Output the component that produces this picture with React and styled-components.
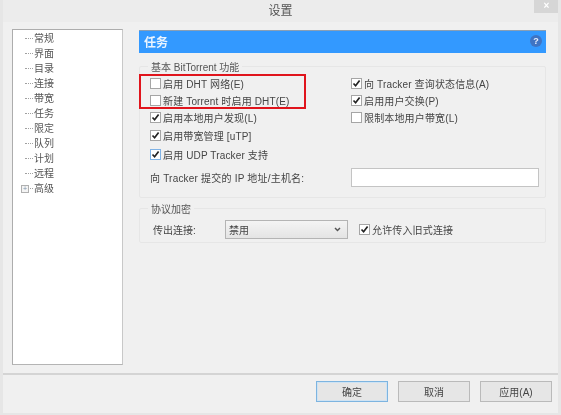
import React from 'react';
import styled, { createGlobalStyle } from 'styled-components';

const GlobalStyle = createGlobalStyle`
  html, body {
    margin: 0;
    padding: 0;
    background: #f0f0f0;
  }
  body {
    font-family: "Liberation Sans", "Noto Sans CJK SC", sans-serif;
    font-size: 10px;
    color: #454545;
  }
`;

const Window = styled.div`
  position: relative;
  width: 561px;
  height: 415px;
  box-sizing: border-box;
  display: flex;
  flex-direction: column;
  background: #f0f0f0;
  border: 1px solid #e6e6e6;
  border-width: 0 3px 2px 3px;
  overflow: hidden;
  filter: blur(0.45px);
`;

const TitleBar = styled.div`
  height: 22px;
  flex: none;
  display: flex;
  align-items: center;
  justify-content: center;
  position: relative;
  background: #ececec;
  font-size: 12px;
  color: #555;
  padding-bottom: 4px;
  box-sizing: border-box;
`;

const CloseButton = styled.div`
  position: absolute;
  top: 0;
  right: -1px;
  width: 25px;
  height: 13px;
  background: #d6d6d6;
  color: #fff;
  font-size: 10px;
  font-weight: bold;
  line-height: 12px;
  text-align: center;
`;

const Body = styled.div`
  flex: 1;
  min-height: 0;
  display: flex;
  gap: 16px;
  padding: 7px 12px 8px 9px;
  border-bottom: 2px solid #d4d4d4;
`;

const Sidebar = styled.ul`
  width: 111px;
  flex: none;
  box-sizing: border-box;
  margin: 0;
  padding: 1px 0 0 21px;
  list-style: none;
  background: #fff;
  border: 1px solid #adadad;
  border-right-color: #c8c8c8;
  border-bottom-color: #b4b4b4;
`;

const TreeItem = styled.li`
  position: relative;
  height: 15px;
  line-height: 15px;
  font-size: 10px;
  color: #555;

  &::before {
    content: '';
    position: absolute;
    left: -9px;
    top: 7px;
    width: 8px;
    border-top: 1px dotted #a0a0a0;
  }
`;

const Expander = styled.span`
  position: absolute;
  left: -13px;
  top: 4px;
  width: 6px;
  height: 6px;
  background: #f4f4f4;
  border: 1px solid #b0b0b0;
  z-index: 1;
  color: #7a90a8;
  font-size: 7px;
  line-height: 6px;
  text-align: center;
`;

const Content = styled.div`
  flex: 1;
  min-width: 0;
  display: flex;
  flex-direction: column;
`;

const Header = styled.div`
  height: 23px;
  flex: none;
  display: flex;
  align-items: center;
  justify-content: space-between;
  box-sizing: border-box;
  padding: 0 4px 2px 5px;
  margin-top: 1px;
  background: #3399ff;
  border-top: 1px solid #8a9fb5;
  color: #eaf4ff;
  font-size: 12px;
  font-weight: bold;
`;

const HelpIcon = styled.span`
  width: 12px;
  height: 12px;
  border-radius: 50%;
  background: #3f74c4;
  color: #e8f0ff;
  font-size: 9px;
  line-height: 12px;
  text-align: center;
`;

const Group = styled.fieldset`
  margin: ${(p) => p.$top}px 0 0;
  padding: 0;
  min-width: 0;
  height: ${(p) => p.$height}px;
  box-sizing: border-box;
  border: 1px solid #e6e6e6;
  border-radius: 2px;
`;

const Legend = styled.legend`
  margin-left: 8px;
  padding: 3px 3px 0;
  line-height: 12px;
  font-size: 10px;
  color: #555;
`;

const OptionsGrid = styled.div`
  display: grid;
  grid-template-columns: 201px 1fr;
  padding: 1px 0 0 10px;
`;

const Column = styled.div`
  display: flex;
  flex-direction: column;
`;

const Option = styled.label`
  display: flex;
  align-items: center;
  gap: 2px;
  height: ${(p) => p.$height || 17}px;
  white-space: nowrap;
  letter-spacing: 0.15px;
`;

const Box = styled.span`
  width: 9px;
  height: 9px;
  flex: none;
  display: flex;
  background: #fff;
  border: 1px solid ${(p) => (p.$focus ? '#7fb2e5' : '#a5a5a5')};
  color: #222;
`;

const HostRow = styled.div`
  display: grid;
  grid-template-columns: 201px 188px;
  align-items: center;
  padding: 4px 0 0 10px;
  letter-spacing: 0.2px;
`;

const TextInput = styled.div`
  height: 19px;
  box-sizing: border-box;
  background: #fff;
  border: 1px solid #c4c4c4;
`;

const EncryptRow = styled.div`
  display: flex;
  align-items: center;
  height: 21px;
  padding: 3px 0 0 13px;
`;

const RowLabel = styled.span`
  width: 72px;
  flex: none;
`;

const Select = styled.div`
  width: 123px;
  height: 19px;
  flex: none;
  box-sizing: border-box;
  display: flex;
  align-items: center;
  justify-content: space-between;
  padding: 0 6px 0 3px;
  margin-right: 11px;
  background: linear-gradient(#f4f4f4, #e4e4e4);
  border: 1px solid #b4b4b4;
`;

const Footer = styled.div`
  height: 38px;
  flex: none;
  display: flex;
  justify-content: flex-end;
  gap: 10px;
  padding: 6px 6px 0 0;
  box-sizing: border-box;
`;

const Button = styled.div`
  width: 72px;
  height: 21px;
  box-sizing: border-box;
  display: flex;
  align-items: center;
  justify-content: center;
  background: #e6e6e6;
  border: 1px solid ${(p) => (p.$primary ? '#7db4e0' : '#bababa')};
  box-shadow: ${(p) => (p.$primary ? 'inset 0 0 0 1px #cfe3f3' : 'none')};
`;

const RedBox = styled.div`
  position: absolute;
  left: 136px;
  top: 74px;
  width: 167px;
  height: 35px;
  box-sizing: border-box;
  border: 2px solid #e0141c;
`;

const Check = () => (
  <svg width="9" height="9" viewBox="0 0 9 9">
    <path d="M1.5 4.5 L3.6 6.8 L7.6 1.6" fill="none" stroke="currentColor" strokeWidth="1.7" />
  </svg>
);

const Checkbox = ({ checked, focus, label, height }) => (
  <Option $height={height}>
    <Box $focus={focus}>{checked && <Check />}</Box>
    {label}
  </Option>
);

const treeItems = ['常规', '界面', '目录', '连接', '带宽', '任务', '限定', '队列', '计划', '远程'];

export default function App() {
  return (
    <>
      <GlobalStyle />
      <Window>
        <TitleBar>
          设置
          <CloseButton>×</CloseButton>
        </TitleBar>
        <Body>
          <Sidebar>
            {treeItems.map((item) => (
              <TreeItem key={item}>{item}</TreeItem>
            ))}
            <TreeItem>
              <Expander>+</Expander>
              高级
            </TreeItem>
          </Sidebar>
          <Content>
            <Header>
              任务
              <HelpIcon>?</HelpIcon>
            </Header>
            <Group $top={6} $height={139}>
              <Legend>基本 BitTorrent 功能</Legend>
              <OptionsGrid>
                <Column>
                  <Checkbox label="启用 DHT 网络(E)" />
                  <Checkbox label="新建 Torrent 时启用 DHT(E)" />
                  <Checkbox checked label="启用本地用户发现(L)" />
                  <Checkbox checked label="启用带宽管理 [uTP]" height={19} />
                  <Checkbox checked focus label="启用 UDP Tracker 支持" height={19} />
                </Column>
                <Column>
                  <Checkbox checked label="向 Tracker 查询状态信息(A)" />
                  <Checkbox checked label="启用用户交换(P)" />
                  <Checkbox label="限制本地用户带宽(L)" />
                </Column>
              </OptionsGrid>
              <HostRow>
                <span>向 Tracker 提交的 IP 地址/主机名:</span>
                <TextInput />
              </HostRow>
            </Group>
            <Group $top={3} $height={42}>
              <Legend>协议加密</Legend>
              <EncryptRow>
                <RowLabel>传出连接:</RowLabel>
                <Select>
                  禁用
                  <svg width="7" height="5" viewBox="0 0 7 5">
                    <path d="M1 1 L3.5 3.6 L6 1" fill="none" stroke="#555" strokeWidth="1.4" />
                  </svg>
                </Select>
                <Checkbox checked label="允许传入旧式连接" />
              </EncryptRow>
            </Group>
          </Content>
        </Body>
        <Footer>
          <Button $primary>确定</Button>
          <Button>取消</Button>
          <Button>应用(A)</Button>
        </Footer>
        <RedBox />
      </Window>
    </>
  );
}
